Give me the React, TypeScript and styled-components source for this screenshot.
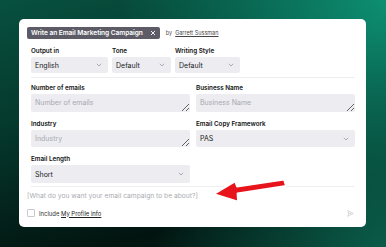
import React from "react";
import styled, { createGlobalStyle } from "styled-components";

const Global = createGlobalStyle`
  html, body { margin: 0; padding: 0; }
  body {
    width: 386px; height: 247px; overflow: hidden;
    font-family: Inter, "Noto Sans", "Liberation Sans", sans-serif;
    background:
      radial-gradient(ellipse 70% 95% at 100% 0%, #0d8f72 0%, rgba(13,143,114,0) 100%),
      radial-gradient(ellipse 60% 70% at 100% 100%, #0a5c49 0%, rgba(10,92,73,0) 100%),
      linear-gradient(165deg, #07503f 0%, #053a2e 35%, #021410 78%, #03211a 100%);
  }
`;

const Stage = styled.div`
  position: relative;
  width: 386px;
  height: 247px;
  padding: 19px 20px 20px 19px;
  box-sizing: border-box;
`;

const Card = styled.div`
  background: #fff;
  border-radius: 5px;
  height: 208px;
  box-sizing: border-box;
  padding: 8px 8px 0 8px;
  display: flex;
  flex-direction: column;
`;

const Header = styled.div`
  display: flex;
  align-items: center;
  gap: 6px;
  height: 12px;
`;

const Chip = styled.div`
  display: flex;
  align-items: center;
  gap: 7px;
  height: 12px;
  padding: 0 4px 0 4px;
  background: #5d5c66;
  color: #fff;
  border-radius: 2px;
  font-size: 6.6px;
  font-weight: 600;
  letter-spacing: -0.05px;
`;

const By = styled.span`
  font-size: 5.5px;
  color: #555;
  display: flex;
  gap: 3px;
  a { color: #444; text-decoration: underline; }
`;

const Form = styled.div`
  padding: 0 3px 0 4px;
  display: flex;
  flex-direction: column;
`;

const TopRow = styled.div`
  display: flex;
  gap: 4px;
  margin-top: 8px;
  padding-bottom: 4px;
  border-bottom: 1px solid #ededf0;
`;

const Field = styled.div<{ $w?: number }>`
  display: flex;
  flex-direction: column;
  width: ${(p) => (p.$w ? `${p.$w}px` : "auto")};
  min-width: 0;
`;

const Label = styled.label`
  font-size: 6.3px;
  font-weight: 600;
  color: #111;
  line-height: 8px;
  height: 8px;
  margin-bottom: 2px;
`;

const SelectBox = styled.div<{ $h: number }>`
  height: ${(p) => p.$h}px;
  background: #ececf1;
  border-radius: 2px;
  display: flex;
  align-items: center;
  justify-content: space-between;
  padding: 0 6px 0 4px;
  font-size: 7px;
  color: #222;
  box-sizing: border-box;
`;

const Input = styled.textarea<{ $h: number }>`
  height: ${(p) => p.$h}px;
  background: #ececf1;
  border: none;
  border-radius: 2px;
  padding: 4px 4px 0 4px;
  font-family: inherit;
  font-size: 7px;
  color: #222;
  box-sizing: border-box;
  resize: vertical;
  outline: none;
  width: 100%;
  &::placeholder { color: #a9a9b0; }
`;

const Grid = styled.div`
  display: grid;
  grid-template-columns: 159px 159px;
  column-gap: 6px;
  row-gap: 8px;
  margin-top: 6px;
`;

const Divider = styled.div`
  height: 1px;
  background: #efeff2;
  margin-top: 3px;
`;

const Prompt = styled.div`
  font-size: 6.7px;
  color: #ababb0;
  margin-top: 4px;
  height: 10px;
  line-height: 10px;
`;

const Footer = styled.div`
  display: flex;
  align-items: center;
  justify-content: space-between;
  margin-top: 8px;
  padding-right: 4px;
`;

const Check = styled.label`
  display: flex;
  align-items: center;
  gap: 4px;
  font-size: 5.9px;
  color: #333;
  a { color: #222; text-decoration: underline; }
`;

const Box = styled.span`
  width: 6px;
  height: 6px;
  border: 1px solid #c9c9cf;
  border-radius: 1px;
  background: #fff;
`;

const ArrowLayer = styled.svg`
  position: absolute;
  left: 0;
  top: 0;
  pointer-events: none;
`;

const Chevron = () => (
  <svg width="6" height="4" viewBox="0 0 6 4">
    <path d="M0.8 0.8 L3 3 L5.2 0.8" fill="none" stroke="#9a9aa3" strokeWidth="0.8" />
  </svg>
);

const Send = () => (
  <svg width="7" height="7" viewBox="0 0 10 10">
    <path d="M1 1 L9 5 L1 9 L2.5 5 Z M2.5 5 H6" fill="none" stroke="#c9c9ce" strokeWidth="1" strokeLinejoin="round" />
  </svg>
);

export default function App() {
  return (
    <Stage>
      <Global />
      <Card>
        <Header>
          <Chip>
            <span>Write an Email Marketing Campaign</span>
            <svg width="6" height="6" viewBox="0 0 6 6">
              <path d="M1 1 L5 5 M5 1 L1 5" stroke="#fff" strokeWidth="0.9" />
            </svg>
          </Chip>
          <By>
            <span>by</span>
            <a>Garrett Sussman</a>
          </By>
        </Header>
        <Form>
          <TopRow>
            <Field $w={77}>
              <Label>Output in</Label>
              <SelectBox $h={16}>English<Chevron /></SelectBox>
            </Field>
            <Field $w={59}>
              <Label>Tone</Label>
              <SelectBox $h={16}>Default<Chevron /></SelectBox>
            </Field>
            <Field $w={65}>
              <Label>Writing Style</Label>
              <SelectBox $h={16}>Default<Chevron /></SelectBox>
            </Field>
          </TopRow>
          <Grid>
            <Field>
              <Label>Number of emails</Label>
              <Input $h={18} placeholder="Number of emails" />
            </Field>
            <Field>
              <Label>Business Name</Label>
              <Input $h={18} placeholder="Business Name" />
            </Field>
            <Field>
              <Label>Industry</Label>
              <Input $h={17} placeholder="Industry" />
            </Field>
            <Field>
              <Label>Email Copy Framework</Label>
              <SelectBox $h={17}>PAS<Chevron /></SelectBox>
            </Field>
            <Field>
              <Label>Email Length</Label>
              <SelectBox $h={18}>Short<Chevron /></SelectBox>
            </Field>
          </Grid>
          <Divider />
        </Form>
        <Prompt>[What do you want your email campaign to be about?]</Prompt>
        <Footer>
          <Check>
            <Box />
            <span>Include <a>My Profile info</a></span>
          </Check>
          <Send />
        </Footer>
      </Card>
      <ArrowLayer width="386" height="247" viewBox="0 0 386 247">
        <path
          d="M284 179.5 L237 186.5 L235 181.5 L214 194 L238 201.5 L237.5 193.5 L286 186 Z"
          fill="#e8141b"
          stroke="#fff"
          strokeWidth="1.8"
          strokeLinejoin="round"
        />
      </ArrowLayer>
    </Stage>
  );
}
